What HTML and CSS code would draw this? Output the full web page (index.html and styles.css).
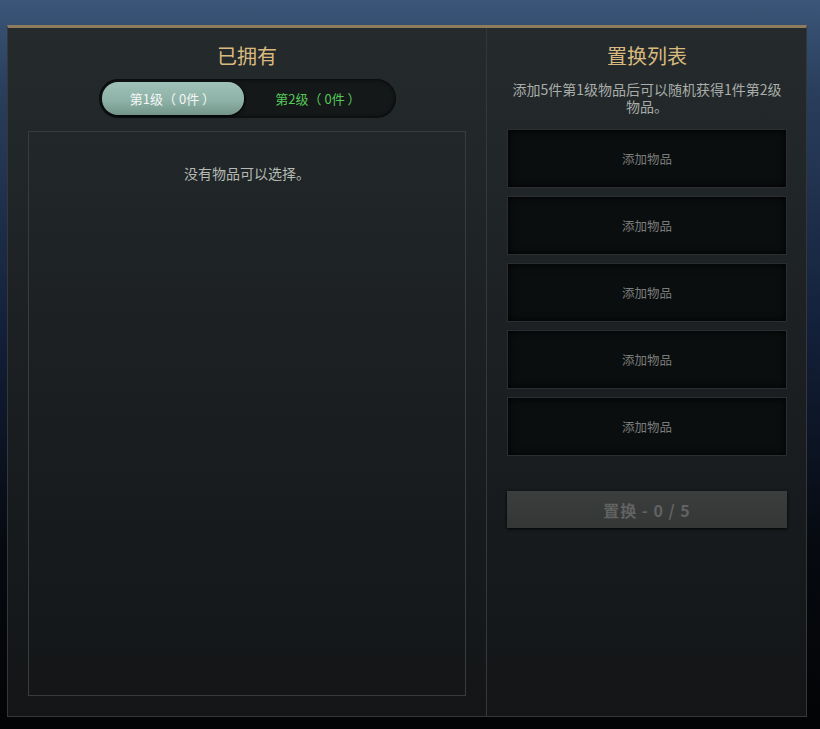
FILE: index.html
```html
<!DOCTYPE html>
<html lang="zh-CN">
<head>
  <meta charset="UTF-8" />
  <title>置换</title>
  <link rel="stylesheet" href="styles.css">
</head>
<body>
  <div class="panel">
    <section class="owned">
      <h1>已拥有</h1>
      <div class="tabs">
        <button class="tab active">第1级（ 0件 ）</button>
        <button class="tab">第2级（ 0件 ）</button>
      </div>
      <div class="item-list">
        <p class="empty">没有物品可以选择。</p>
      </div>
    </section>

    <section class="trade">
      <h1>置换列表</h1>
      <p class="hint">添加5件第1级物品后可以随机获得1件第2级物品。</p>
      <div class="slots">
        <div class="slot">添加物品</div>
        <div class="slot">添加物品</div>
        <div class="slot">添加物品</div>
        <div class="slot">添加物品</div>
        <div class="slot">添加物品</div>
      </div>
      <button class="trade-btn" disabled>置换 - 0 / 5</button>
    </section>
  </div>
</body>
</html>
```

FILE: styles.css
```css
html, body {
  height: 100%;
}

body {
  margin: 0;
  padding: 25px 13px 12px 7px;
  box-sizing: border-box;
  font-family: "Noto Sans CJK SC", "Noto Sans", sans-serif;
  background: linear-gradient(180deg, #3b5679 0%, #2a3f5d 12%, #13203a 45%, #06090f 75%, #030405 100%);
  color: #b8bdb8;
}

.panel {
  height: 692px;
  display: flex;
  border: 1px solid #34383a;
  border-top: 3px solid #8c7b5c;
  background: linear-gradient(180deg, #252b2d 0%, #1d2123 40%, #131517 100%);
  box-sizing: border-box;
}

h1 {
  margin: 0;
  padding-top: 1px;
  text-align: center;
  font-size: 20px;
  font-weight: 400;
  line-height: 26px;
  color: #d9b97e;
}

.owned {
  width: 479px;
  padding: 14px 20px 20px;
  box-sizing: border-box;
  border-right: 1px solid #34383a;
  display: flex;
  flex-direction: column;
  align-items: center;
}

.tabs {
  margin-top: 10px;
  width: 297px;
  height: 39px;
  padding: 3px;
  box-sizing: border-box;
  border-radius: 20px;
  background: #151819;
  box-shadow: inset 0 0 4px #000;
  display: flex;
}

.tab {
  flex: 0 0 142px;
  border: none;
  border-radius: 16px;
  background: none;
  font-family: inherit;
  font-size: 13px;
  color: #56c85a;
  cursor: pointer;
}

.tab + .tab {
  flex: 1;
}

.tab.active {
  color: #f4f7f5;
  background: linear-gradient(180deg, #a0c2b8 0%, #8cb0a5 60%, #739489 100%);
  box-shadow: 1px 1px 3px #000;
}

.item-list {
  align-self: stretch;
  margin-top: 13px;
  flex: 1;
  border: 1px solid #393c3e;
}

.empty {
  margin: 31px 0 0;
  text-align: center;
  font-size: 14px;
  color: #b5bab5;
}

.trade {
  flex: 1;
  padding: 14px 19px 0 20px;
  box-sizing: border-box;
}

.hint {
  margin: 12px 0 0;
  text-align: center;
  font-size: 14px;
  line-height: 17px;
  color: #a8ada9;
}

.slots {
  margin-top: 14px;
  display: flex;
  flex-direction: column;
  gap: 8px;
}

.slot {
  height: 57px;
  display: flex;
  align-items: center;
  justify-content: center;
  border: 1px solid #2b2e30;
  background: #0b0e0f;
  box-shadow: inset 0 0 8px #000;
  font-size: 12.5px;
  color: #7a7d7b;
}

.trade-btn {
  margin-top: 35px;
  width: 100%;
  height: 37px;
  border: none;
  background: linear-gradient(180deg, #3c3d3d, #353636);
  box-shadow: 0 1px 3px #000;
  font-family: inherit;
  font-size: 16px;
  font-weight: bold;
  letter-spacing: 1px;
  color: #616363;
}
```
